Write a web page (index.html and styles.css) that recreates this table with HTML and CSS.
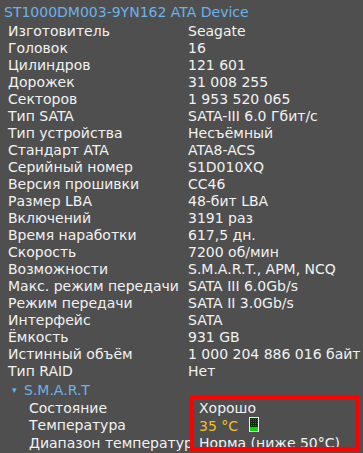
FILE: index.html
```html
<!DOCTYPE html>
<html lang="ru">
<head>
    <meta charset="UTF-8">
    <meta name="viewport" content="width=device-width, initial-scale=1.0">
    <title>ST1000DM003-9YN162 ATA Device</title>
    <link rel="stylesheet" href="styles.css">
</head>
<body>
    <div class="drive-panel">
        <div class="drive-title">ST1000DM003-9YN162 ATA Device</div>
        <div class="props">
            <span class="label">Изготовитель</span><span class="value">Seagate</span>
            <span class="label">Головок</span><span class="value">16</span>
            <span class="label">Цилиндров</span><span class="value">121 601</span>
            <span class="label">Дорожек</span><span class="value">31 008 255</span>
            <span class="label">Секторов</span><span class="value">1 953 520 065</span>
            <span class="label">Тип SATA</span><span class="value">SATA-III 6.0 Гбит/с</span>
            <span class="label">Тип устройства</span><span class="value">Несъёмный</span>
            <span class="label">Стандарт ATA</span><span class="value">ATA8-ACS</span>
            <span class="label">Серийный номер</span><span class="value">S1D010XQ</span>
            <span class="label">Версия прошивки</span><span class="value">CC46</span>
            <span class="label">Размер LBA</span><span class="value">48-бит LBA</span>
            <span class="label">Включений</span><span class="value">3191 раз</span>
            <span class="label">Время наработки</span><span class="value">617,5 дн.</span>
            <span class="label">Скорость</span><span class="value">7200 об/мин</span>
            <span class="label">Возможности</span><span class="value">S.M.A.R.T., APM, NCQ</span>
            <span class="label">Макс. режим передачи</span><span class="value">SATA III 6.0Gb/s</span>
            <span class="label">Режим передачи</span><span class="value">SATA II 3.0Gb/s</span>
            <span class="label">Интерфейс</span><span class="value">SATA</span>
            <span class="label">Ёмкость</span><span class="value">931 GB</span>
            <span class="label">Истинный объём</span><span class="value">1 000 204 886 016 байт</span>
            <span class="label">Тип RAID</span><span class="value">Нет</span>
        </div>

        <div class="section">
            <div class="section-head"><span class="arrow">&#9662;</span>S.M.A.R.T</div>
            <div class="props sub">
                <span class="label">Состояние</span><span class="value">Хорошо</span>
                <span class="label">Температура</span>
                <span class="value"><span class="temp">35 °C</span>
                    <svg class="thermo" width="10" height="15" viewBox="0 0 10 15">
                        <defs>
                            <pattern id="dots" width="2" height="2" patternUnits="userSpaceOnUse">
                                <rect width="2" height="2" fill="#0b2a0b"/>
                                <rect width="1" height="1" fill="#2f7a2f"/>
                            </pattern>
                        </defs>
                        <rect x="0" y="0" width="10" height="15" fill="#f2f2f2"/>
                        <rect x="1" y="1" width="8" height="13" fill="url(#dots)"/>
                        <rect x="1" y="10" width="8" height="4" fill="#00e000"/>
                    </svg>
                </span>
                <span class="label">Диапазон температур</span><span class="value">Норма (ниже 50°C)</span>
            </div>
            <div class="highlight"></div>
        </div>
    </div>
</body>
</html>
```

FILE: styles.css
```css
body {
    margin: 0;
    background-color: #4f4f4f;
    font-family: "DejaVu Sans", Verdana, sans-serif;
    font-size: 14px;
    color: #f2f2f2;
}
.drive-panel {
    padding-top: 2px;
}
.drive-title {
    color: #6cb2ea;
    padding-left: 4px;
    line-height: 21px;
}
.props {
    display: grid;
    grid-template-columns: 180px 1fr;
    padding-left: 8px;
    line-height: 17px;
    white-space: nowrap;
}
.section {
    position: relative;
}
.section-head {
    color: #6cb2ea;
    padding-left: 12px;
    line-height: 20px;
}
.arrow {
    display: inline-block;
    width: 12px;
    font-size: 9px;
    vertical-align: 2px;
}
.props.sub {
    padding-left: 29px;
    grid-template-columns: 170px 1fr;
}
.temp {
    color: #f2c21b;
}
.thermo {
    vertical-align: -1px;
    margin-left: 6px;
}
.highlight {
    position: absolute;
    left: 190px;
    top: 15px;
    width: 161px;
    height: 48px;
    border: 4px solid #ff0000;
}
```
